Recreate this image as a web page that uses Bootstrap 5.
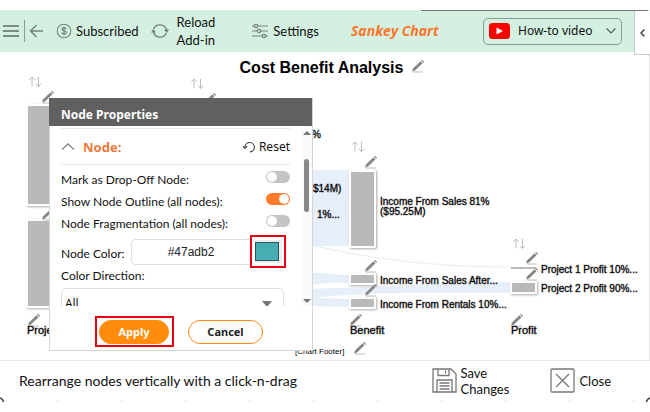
<!DOCTYPE html>
<html lang="en">
<head>
<meta charset="utf-8">
<meta name="viewport" content="width=device-width, initial-scale=1">
<title>Sankey Chart</title>
<link href="https://cdn.jsdelivr.net/npm/bootstrap@5.3.0/dist/css/bootstrap.min.css" rel="stylesheet">
<style>
body{font-family:Lato,"Open Sans",sans-serif;font-size:14px;line-height:18px;color:#111;background:#fff;overflow:hidden}
button{color:inherit}
.plain{border:0;background:none;padding:0;text-align:left}
.toolbar{height:42px;margin-top:10px;background:#d4f0e1;padding:0 28px 0 3px;font-size:13px;white-space:nowrap}
.toolbar svg,.actions svg{flex:none}
.bar-rule{width:1px;height:22px;background:#8b9a92}
.brand{color:#ff7429;font:italic 700 14px/18px "Open Sans",sans-serif;margin-left:32px}
.chart-title{white-space:nowrap}
.video{height:27px;width:139px;border:1px solid #8c9b93;border-radius:5px;background:none;padding:0 5px;font:12px/18px "Noto Sans",sans-serif}
.side-tab{position:absolute;right:0;top:11px;width:16px;height:44px;background:#fff;border:1px solid #ccc;border-width:0 0 1px 1px;z-index:3}
.top-rule{position:absolute;right:2px;top:10px;width:35%;height:1px;background:#777;z-index:4}
.stage{border-right:1px solid #e3e3e3;min-height:308px}
.chart-title{font:700 16px/20px "Liberation Sans",Arial,sans-serif;color:#000;padding-top:6px;margin:0}
.chart text{font-family:"Liberation Sans",Arial,sans-serif;font-size:10px;fill:#000;stroke:#000;stroke-width:1px;stroke-opacity:.35}
.chart .axis{font-size:11px}
.chart .note{font-size:8px;stroke:none}
.node{fill:#b9b9b9;stroke:#fff;stroke-width:2;filter:drop-shadow(1px 1px 1px #aaa)}
.flow{fill:#e6eef9}
.dialog-box{left:49px;top:46px;width:264px;background:#fff;border:1px solid #d5d5d5;border-top:0;font-size:12px;line-height:16px;z-index:2}
.dialog-head{background:#606060;color:#fff;height:28px;padding:0 12px;margin:0 0 0 -1px;font:700 12px/34px "Noto Sans",sans-serif}
.scroller{height:180px;overflow:hidden}
.fields{padding:2px 0 0 11px;width:240px}
.section-row{height:37px;border:solid #e9e9e9;border-width:1px 0;margin-bottom:4px}
.section-name{color:#f07838;font:700 13px/18px "Noto Sans",sans-serif}
.reset{font:12px/18px "Noto Sans",sans-serif}
.line-row{height:22px}
.toggle.form-check-input{width:24px;height:12px;margin:0 0 6px;background-color:#c4c4c4;border:0;float:none;background-size:12px 12px;--bs-form-switch-bg:url("data:image/svg+xml,%3csvg xmlns='http://www.w3.org/2000/svg' viewBox='-4 -4 8 8'%3e%3ccircle r='3.3' fill='%23fff'/%3e%3c/svg%3e")!important;background-image:var(--bs-form-switch-bg)}
.toggle.form-check-input:checked{background-color:#ff7a2b;background-image:var(--bs-form-switch-bg)}
.hex{width:119px;height:26px;border:1px solid #ddd;border-right:0;border-radius:5px 0 0 5px;text-align:center;font:12px/18px "Liberation Sans",Arial,sans-serif;color:#222;padding:0}
.swatch-frame{width:36px;height:33px;border:2px solid #e60012;padding:3px;background:#fff}
.swatch{display:block;width:27px;height:23px;padding:2px 3px 2px 0;background:#eee;border:0}
.swatch::-webkit-color-swatch-wrapper{padding:0}
.swatch::-webkit-color-swatch{border:1px solid #2d5659;border-radius:0}
.direction{width:223px;height:32px;border:1px solid #ddd;border-radius:5px;padding:0 3px;font:12px/18px "Open Sans",sans-serif;appearance:none;background:#fff url("data:image/svg+xml,%3csvg xmlns='http://www.w3.org/2000/svg' width='10' height='6'%3e%3cpath d='M0 0h10L5 6z' fill='%23777'/%3e%3c/svg%3e") no-repeat right 11px top 12px}
.rail{width:11px;background:#fafafa;padding:5px 0 3px}
.thumb{width:5px;height:53px;border-radius:3px;background:#888;margin-top:24px}
.dialog-foot{padding:10px 0 3px 45px;gap:14px}
.apply-frame{border:2px solid #e60012;padding:2px 3px 1px 2px}
.pill{height:24px;border-radius:12px;border:1px solid #ff8c0a;font:700 11px/14px "Noto Sans",sans-serif;padding:0}
.pill-main{width:70px;background:#ff8c0a;color:#fff}
.pill-line{width:75px;background:#fff;color:#222}
.statusbar{height:52px;border-top:1px solid #e6e6e6;padding:0 39px 12px 19px}
.actions{gap:41px;line-height:16px;font-size:13px}
.ticks{position:absolute;left:57px;right:0;bottom:10px;height:2px;background:repeating-linear-gradient(90deg,#ddd 0 1px,#fff 1px 64px)}
.corner{position:absolute;bottom:9px;width:5px;height:6px}
</style>
<script src="https://cdn.jsdelivr.net/npm/bootstrap@5.3.0/dist/js/bootstrap.bundle.min.js"></script>
</head>
<body class="d-flex flex-column min-vh-100 position-relative">
<div class="top-rule"></div>
<header class="toolbar d-flex align-items-center">
  <button class="plain d-flex" aria-label="Menu"><svg width="17" height="14" fill="none" stroke="#5d6b64" stroke-width="1.5"><path d="M0 2h16M0 7h16M0 12h16"/></svg></button>
  <span class="bar-rule ms-1 me-1"></span>
  <button class="plain d-flex me-2 pe-1" aria-label="Back"><svg width="15" height="14" fill="none" stroke="#74817a" stroke-width="1.4"><path d="M14 7H2M7.500 1 1.500 7l6 6"/></svg></button>
  <button class="plain d-flex align-items-center gap-1 me-2 pe-1"><svg width="16" height="16" fill="none" stroke="#74817a" stroke-width="1.100"><circle cx="8" cy="8" r="6.800"/><path d="M10.300 6C10 4.400 6 4.400 6 6.400c0 1.900 4.300 1.100 4.300 3.200 0 1.900-4.100 1.900-4.600-.1M8 3.500v9"/></svg>Subscribed</button>
  <button class="plain d-flex align-items-center gap-2 me-4"><svg width="18" height="18" fill="none" stroke="#74817a" stroke-width="1.300"><path d="M2.500 7A7 7 0 0 1 15.600 8M15.500 11A7 7 0 0 1 2.400 10"/><path d="M13 7.500h5L15.700 11zM0 10.500h5L2.300 7z" fill="#74817a" stroke="none"/></svg><span>Reload<br>Add-in</span></button>
  <button class="plain d-flex align-items-center gap-1 ms-2 ps-1"><svg width="18" height="16" fill="none" stroke="#74817a" stroke-width="1.200"><path d="M1 3h2M7 3h10M1 8h5M10 8h7M1 13h10M15 13h2"/><circle cx="5" cy="3" r="1.700"/><circle cx="8" cy="8" r="1.700"/><circle cx="13" cy="13" r="1.700"/></svg>Settings</button>
  <span class="brand">Sankey Chart</span>
  <button class="video d-flex align-items-center gap-2 ms-auto"><svg width="21" height="16"><rect width="21" height="16" rx="3.500" fill="#f00"/><path d="M7.500 4.500v7L14 8z" fill="#fff"/></svg>How-to video<svg class="ms-auto" width="10" height="6" fill="none" stroke="#52635a" stroke-width="1.200"><path d="m.5.5 4.500 4.500L9.500.5"/></svg></button>
</header>
<button class="side-tab d-flex align-items-center justify-content-center p-0" aria-label="Collapse"><svg width="5" height="8" fill="none" stroke="#333" stroke-width="1.300"><path d="M4.500.5 1 4l3.500 3.500"/></svg></button>

<main class="stage position-relative flex-grow-1">
  <svg class="chart position-absolute top-0 start-0 w-100 h-100" viewBox="0 52 649 308" preserveAspectRatio="xMinYMin meet">
    <defs>
      <g id="pencil"><path d="M1 12h10" stroke="#bbb" stroke-width="1"/><path d="M0 11.500 1 8.500 8.500 1.300l2 1.900L3 10.400z" fill="#858585"/><path d="M9.200.6 10 0l2 2-.8.7z" fill="#666"/></g>
      <g id="sort" fill="none" stroke="#bdbdbd" stroke-width="1"><path d="M3 10.500V1M.3 3.800 3 1l2.700 2.800M9.500 1v9.500M6.800 7.800l2.700 2.700 2.700-2.700"/></g>
    </defs>
    <path class="flow" d="M300 170h50v76h-50z"/>
    <path d="M300 208h50" stroke="#f4f8fd"/>
    <path d="M300 242c60 16 130 25 212 25" fill="none" stroke="#e3edf8"/>
    <path class="flow" d="M300 272c20 0 30 3 50 3v8c-20 0-30-2-50-2z"/>
    <path class="flow" d="M300 289c90-2 150-7 212-7v11c-80 0-140-2-212 6z"/>
    <path class="flow" d="M300 283l50-5v3l-50 5zM300 297c20 0 30 2 50 2v8c-20 0-30-1-50-2z"/>
    <rect class="node" x="27" y="105" width="44" height="100"/>
    <rect class="node" x="27" y="220" width="44" height="87"/>
    <rect class="node" x="350" y="171" width="25" height="76"/>
    <rect class="node" x="350" y="274" width="25" height="10"/>
    <rect class="node" x="350" y="298" width="25" height="10"/>
    <rect x="511" y="267" width="25" height="2" fill="#b9b9b9"/>
    <rect class="node" x="511" y="282" width="25" height="11"/>
    <use href="#sort" x="29" y="76"/><use href="#sort" x="191" y="78"/><use href="#sort" x="352" y="141"/><use href="#sort" x="513" y="238"/>
    <use href="#pencil" x="42" y="91"/><use href="#pencil" x="42" y="208"/><use href="#pencil" x="28" y="314"/><use href="#pencil" x="204" y="93"/>
    <use href="#pencil" x="365" y="156"/><use href="#pencil" x="365" y="260"/><use href="#pencil" x="365" y="284"/><use href="#pencil" x="350" y="314"/><use href="#pencil" x="354" y="342"/>
    <use href="#pencil" x="526" y="252"/><use href="#pencil" x="526" y="268"/><use href="#pencil" x="511" y="314"/>
    <text x="312" y="138">%</text><text x="313" y="192">$14M)</text><text x="317" y="218">1%...</text>
    <text x="380" y="205">Income From Sales 81%</text><text x="380" y="215">($95.25M)</text>
    <text x="380" y="284">Income From Sales After...</text><text x="380" y="308">Income From Rentals 10%...</text>
    <text x="541" y="273">Project 1 Profit 10%...</text><text x="541" y="292">Project 2 Profit 90%...</text>
    <text class="axis" x="27" y="334">Project</text><text class="axis" x="350" y="334">Benefit</text><text class="axis" x="511" y="334">Profit</text>
    <text class="note" x="295" y="354">[Chart Footer]</text>
  </svg>
  <div class="d-flex justify-content-center align-items-end position-relative ps-3">
    <h1 class="chart-title">Cost Benefit Analysis</h1>
    <button class="plain ms-2 d-flex pb-1" aria-label="Edit title"><svg width="14" height="14"><use href="#pencil" x="1" y="0"/></svg></button>
  </div>

  <section class="dialog-box position-absolute" role="dialog" aria-label="Node Properties">
    <h2 class="dialog-head">Node Properties</h2>
    <div class="scroller d-flex justify-content-between">
      <div class="fields">
        <div class="section-row d-flex align-items-center">
          <svg class="me-2" width="14" height="7" fill="none" stroke="#888" stroke-width="1.400"><path d="m1 6.500 6-5.500 6 5.500"/></svg><span class="section-name">Node:</span>
          <button class="plain reset ms-auto d-flex align-items-center gap-1"><svg width="12" height="12" fill="none" stroke="#333" stroke-width="1.100"><path d="M2 6a4.700 4.700 0 1 1 5 4.900M0 5l2 2.500L4.300 5"/></svg>Reset</button>
        </div>
        <div class="line-row d-flex align-items-center justify-content-between form-switch p-0"><label for="drop">Mark as Drop-Off Node:</label><input class="form-check-input toggle" type="checkbox" role="switch" id="drop"></div>
        <div class="line-row d-flex align-items-center justify-content-between form-switch p-0"><label for="outline">Show Node Outline (all nodes):</label><input class="form-check-input toggle" type="checkbox" role="switch" id="outline" checked></div>
        <div class="line-row d-flex align-items-center justify-content-between form-switch p-0"><label for="frag">Node Fragmentation (all nodes):</label><input class="form-check-input toggle" type="checkbox" role="switch" id="frag"></div>
        <div class="d-flex align-items-center me-1"><label for="hex" class="flex-grow-1 pt-1">Node Color:</label><input class="hex" id="hex" value="#47adb2"><div class="swatch-frame"><input type="color" class="swatch" value="#47adb2" aria-label="Pick color"></div></div>
        <label for="direction" class="d-block mb-1">Color Direction:</label>
        <select class="direction" id="direction"><option>All</option></select>
      </div>
      <div class="rail d-flex flex-column align-items-center">
        <svg width="8" height="4"><path d="M0 4h8L4 0z" fill="#777"/></svg>
        <div class="thumb"></div>
        <svg class="mt-auto" width="8" height="4"><path d="M0 0h8L4 4z" fill="#777"/></svg>
      </div>
    </div>
    <div class="dialog-foot d-flex align-items-center">
      <div class="apply-frame"><button class="pill pill-main d-block">Apply</button></div>
      <button class="pill pill-line">Cancel</button>
    </div>
  </section>
</main>

<footer class="statusbar d-flex align-items-center justify-content-between position-relative">
  <span>Rearrange nodes vertically with a click-n-drag</span>
  <div class="actions d-flex align-items-center">
    <button class="plain d-flex align-items-center gap-1"><svg width="25" height="25" fill="none" stroke="#777" stroke-width="1.300"><path d="M1 1h18l5 5v18H1zM6 1v6.500h11V1M13.500 2.500v3M5 24V12h15v12M7.500 15h10M7.500 18h10M7.500 21h10"/></svg><span>Save<br>Changes</span></button>
    <button class="plain d-flex align-items-center gap-1"><svg width="25" height="25" fill="none" stroke="#777" stroke-width="1.300"><rect x="1" y="1" width="23" height="23" rx="1"/><path d="m6 6 13 13M19 6 6 19"/></svg>Close</button>
  </div>
  <div class="ticks"></div>
  <svg class="corner start-0" fill="none" stroke="#444" stroke-width="1.500"><path d="M0 1q3 1 3.500 4"/></svg>
  <svg class="corner end-0" fill="none" stroke="#444" stroke-width="1.500"><path d="M5 1Q2 2 1.500 5"/></svg>
</footer>
</body>
</html>
